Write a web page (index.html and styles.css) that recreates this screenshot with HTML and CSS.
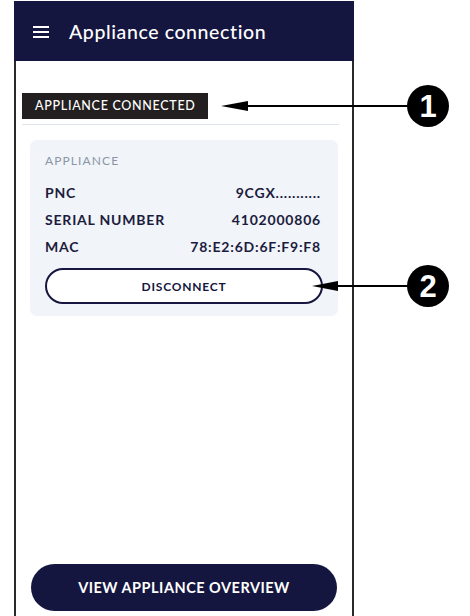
FILE: index.html
```html
<!DOCTYPE html>
<html>
<head>
<meta charset="utf-8">
<link rel="stylesheet" href="styles.css">
</head>
<body>
<div class="stage">
  <div class="phone">
    <header class="topbar">
      <span class="burger"><i></i><i></i><i></i></span>
      <h1 class="title">Appliance connection</h1>
    </header>
    <main class="screen">
      <div class="status"><span class="badge">APPLIANCE CONNECTED</span></div>
      <section class="card">
        <div class="card-label">APPLIANCE</div>
        <div class="rows">
          <div class="row"><span>PNC</span><span>9CGX...........</span></div>
          <div class="row"><span>SERIAL NUMBER</span><span>4102000806</span></div>
          <div class="row"><span>MAC</span><span>78:E2:6D:6F:F9:F8</span></div>
        </div>
        <button class="btn-outline">DISCONNECT</button>
      </section>
      <div class="spacer"></div>
      <button class="btn-primary">VIEW APPLIANCE OVERVIEW</button>
    </main>
  </div>
  <svg class="callouts" width="470" height="616" viewBox="0 0 470 616">
    <line x1="245" y1="106" x2="410" y2="106" stroke="#000" stroke-width="2"/>
    <polygon points="221,106 248,101 248,111" fill="#000"/>
    <circle cx="428" cy="106" r="21" fill="#000"/>
    <text x="428" y="117" class="num">1</text>
    <line x1="335" y1="286" x2="410" y2="286" stroke="#000" stroke-width="2"/>
    <polygon points="312,286 338,281 338,291" fill="#000"/>
    <circle cx="428" cy="286" r="21" fill="#000"/>
    <text x="428" y="297" class="num">2</text>
  </svg>
</div>
</body>
</html>
```
FILE: styles.css
```css
* { box-sizing: border-box; }
html, body { margin: 0; padding: 0; background: #fff; }
body { font-family: Lato, "Noto Sans", sans-serif; color: #16163e; }
.stage { position: relative; width: 470px; height: 616px; overflow: hidden; }
.phone {
  margin-left: 14px;
  padding-top: 1px;
  width: 340px;
  height: 616px;
  display: flex;
  flex-direction: column;
}
.topbar {
  height: 60px;
  background: #15163f;
  display: flex;
  align-items: center;
  padding-left: 19px;
  gap: 20px;
  flex: none;
}
.burger { display: flex; flex-direction: column; gap: 3px; width: 16px; margin-top: 1px; }
.burger i { display: block; height: 2px; background: #fff; }
.title {
  margin: 0;
  color: #fff;
  font-size: 19.5px;
  font-weight: 500;
  letter-spacing: 0.6px;
}
.screen {
  flex: 1;
  border-left: 2px solid #2a2a2a;
  border-right: 2px solid #2a2a2a;
  display: flex;
  flex-direction: column;
  padding: 32px 0 5px 0;
}
.status {
  margin: 0 13px 0 6px;
  border-bottom: 1px solid #dfe5eb;
  padding-bottom: 5px;
}
.badge {
  display: inline-block;
  background: #231f20;
  color: #fff;
  font-size: 12.5px;
  font-weight: 500;
  letter-spacing: 0.7px;
  height: 26px;
  line-height: 26px;
  padding: 0 12px 0 13px;
}
.card {
  margin: 15px 14px 0 14px;
  background: #f1f4f8;
  border-radius: 7px;
  padding: 13px 15px 12px 15px;
  height: 176px;
}
.card-label {
  color: #8c95a8;
  font-size: 12px;
  letter-spacing: 1.1px;
  line-height: 16px;
}
.rows { margin-top: 15px; display: flex; flex-direction: column; gap: 9px; }
.row {
  display: flex;
  justify-content: space-between;
  font-size: 14px;
  line-height: 18px;
  font-weight: 700;
  letter-spacing: 0.8px;
  padding-right: 2px;
  color: #1c1c3e;
}
.btn-outline {
  margin-top: 12px;
  width: 100%;
  height: 36px;
  border: 2px solid #16163e;
  border-radius: 18px;
  background: #fff;
  color: #16163e;
  font-family: inherit;
  font-size: 12px;
  font-weight: 700;
  letter-spacing: 0.8px;
}
.spacer { flex: 1; }
.btn-primary {
  margin: 0 15px 0 15px;
  height: 47px;
  border: none;
  border-radius: 24px;
  background: #15163f;
  color: #fff;
  font-family: inherit;
  font-size: 14.5px;
  font-weight: 700;
  letter-spacing: 0.5px;
}
.callouts { position: absolute; left: 0; top: 0; pointer-events: none; }
.num {
  fill: #fff;
  font-family: "Liberation Sans", sans-serif;
  font-weight: 700;
  font-size: 31px;
  text-anchor: middle;
}
```
